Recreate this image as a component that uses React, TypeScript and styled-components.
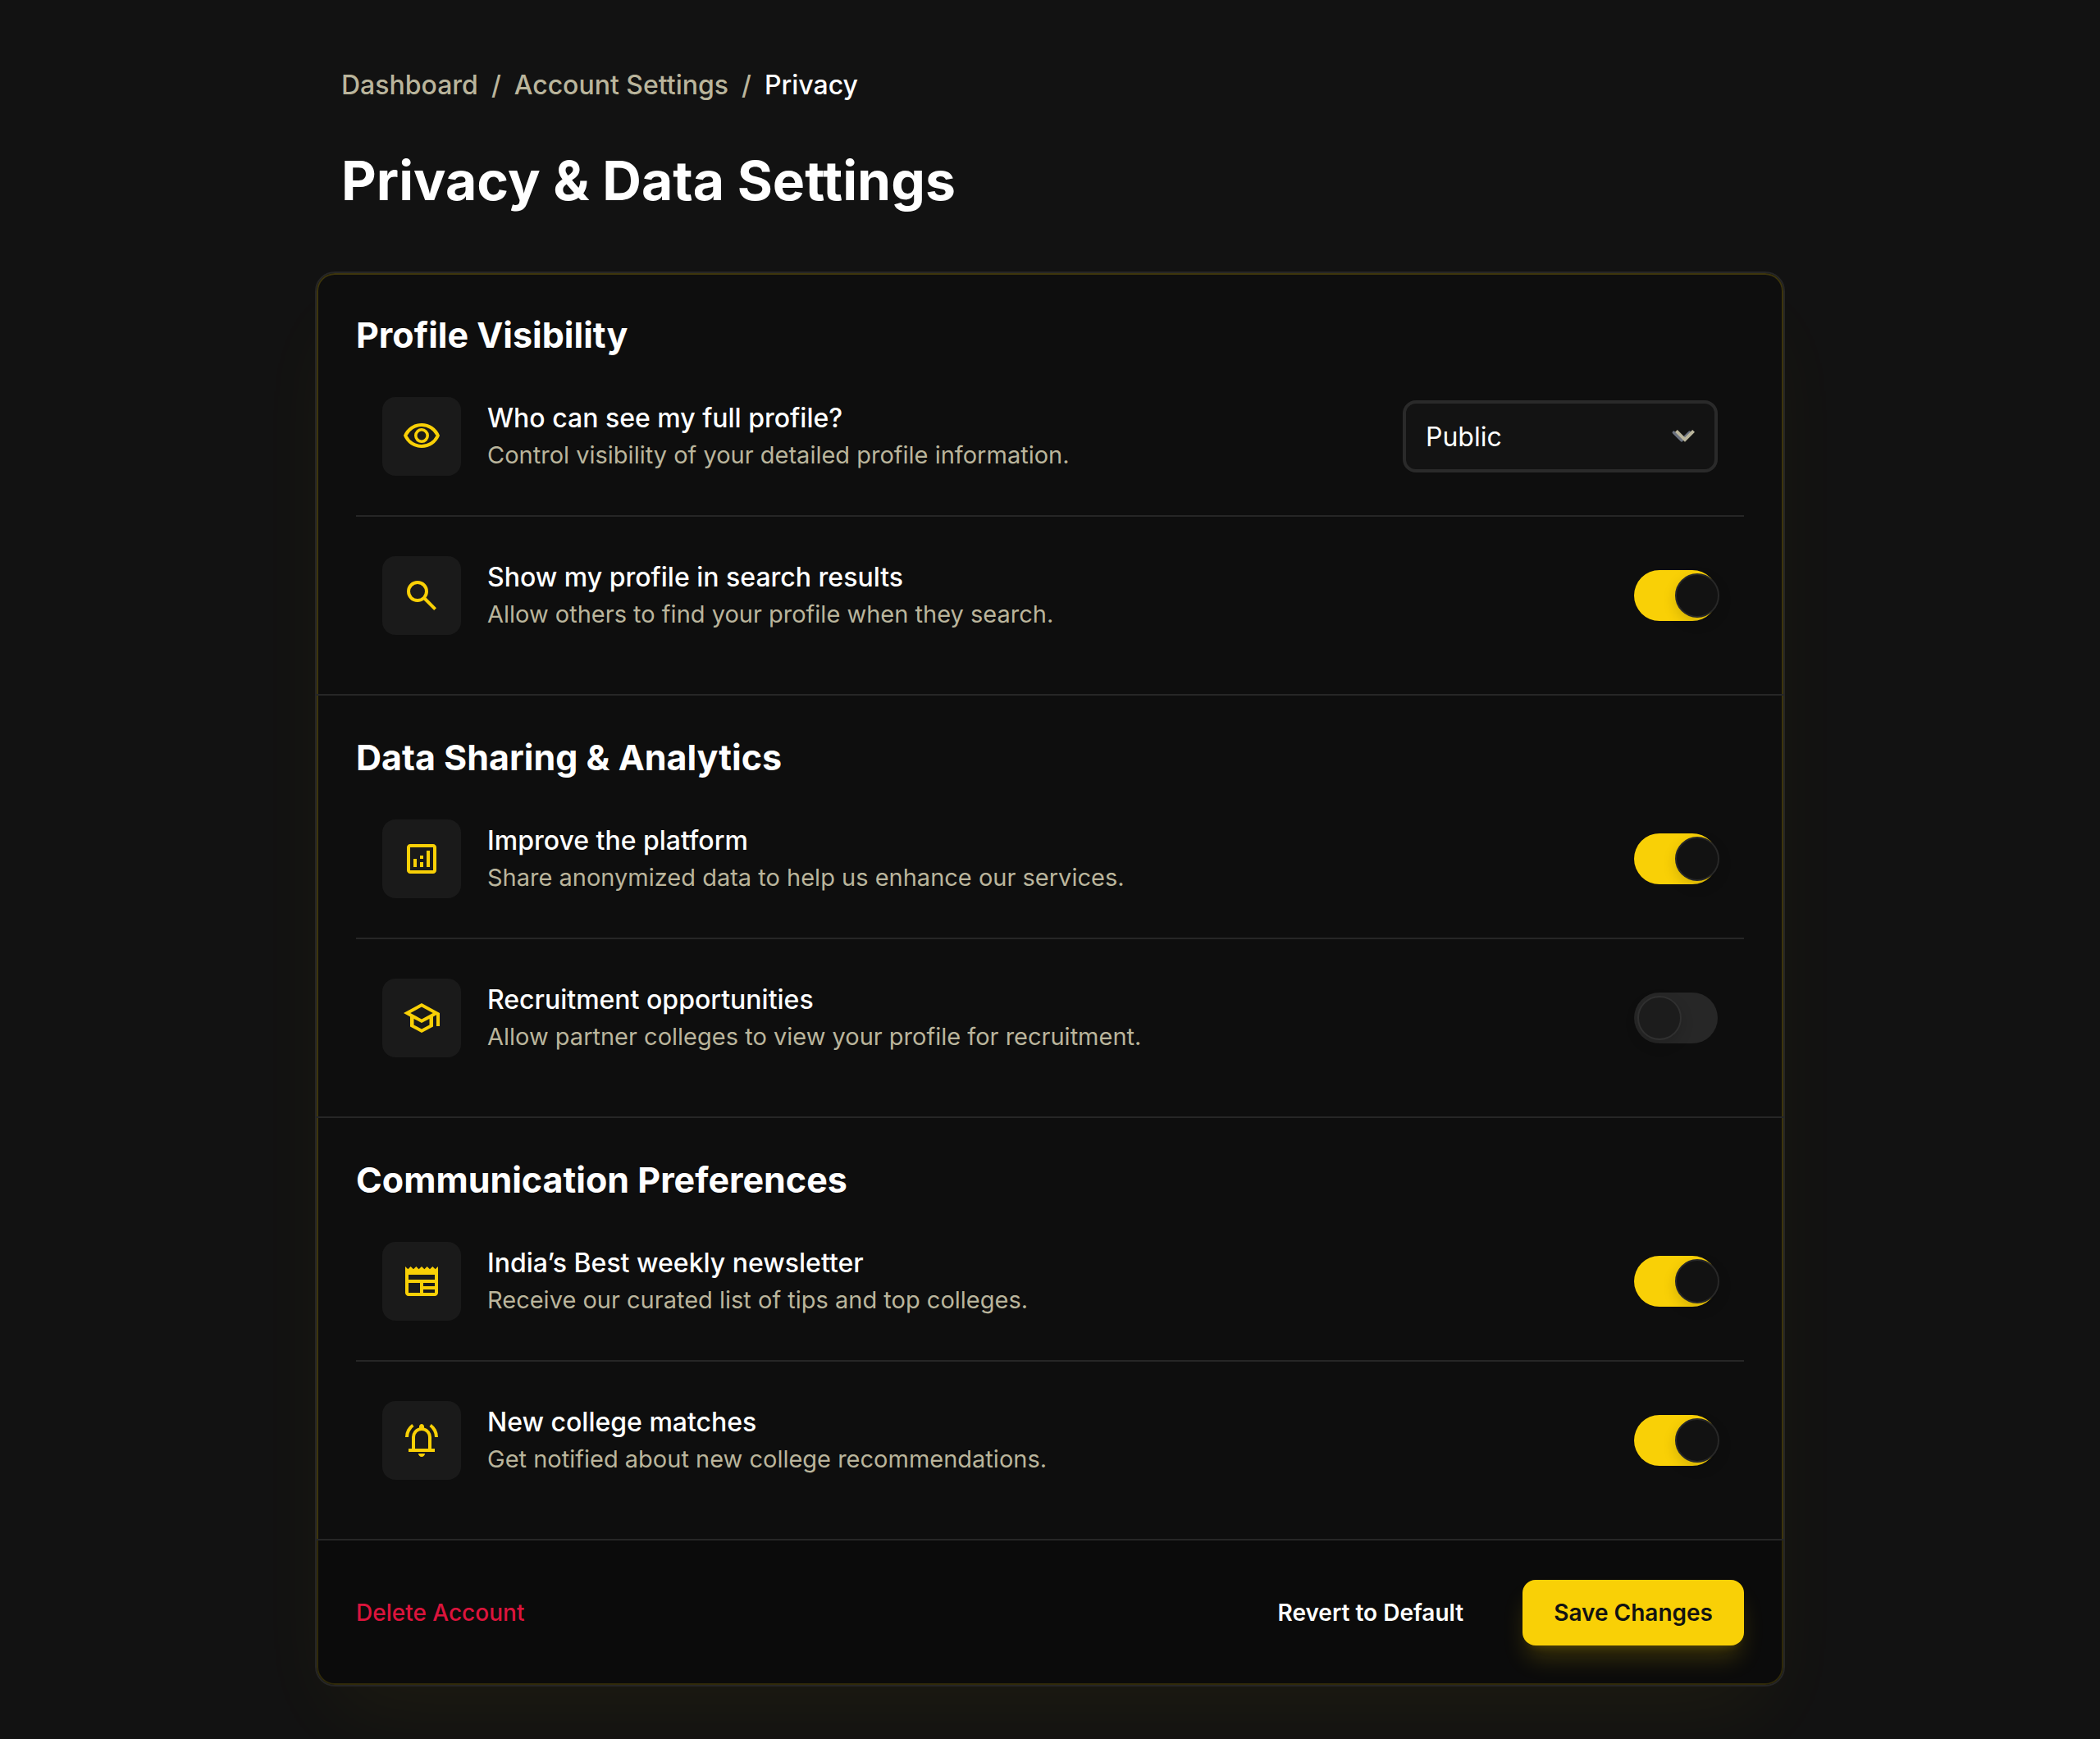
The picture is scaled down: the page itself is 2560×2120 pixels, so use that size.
import React, { useId, useState } from "react";
import styled, { createGlobalStyle } from "styled-components";

const color = {
  page: "#121212",
  card: "#0e0e0e",
  line: "#262626",
  tile: "#1a1a1a",
  text: "#ffffff",
  muted: "#bab59c",
  accent: "#f9d006",
  danger: "#dc143c",
};

const GlobalStyle = createGlobalStyle`
  *, *::before, *::after { box-sizing: border-box; }
  body {
    margin: 0;
    background: ${color.page};
    color: ${color.text};
    font-family: "Inter", "Liberation Sans", sans-serif;
    font-size: 32px;
  }
  button, select, input { font-family: inherit; margin: 0; }
`;

const Page = styled.main`
  max-width: 1792px;
  min-height: 100vh;
  margin: 0 auto;
  padding: 80px 0 64px;
`;

const Header = styled.header`
  padding: 0 32px;
`;

const Crumbs = styled.ol`
  display: flex;
  flex-wrap: wrap;
  gap: 16px;
  margin: 0;
  padding: 0;
  list-style: none;
  font-weight: 500;
  line-height: 48px;
  color: ${color.muted};
`;

const Crumb = styled.li`
  display: flex;
  gap: 16px;

  &:not(:last-child)::after {
    content: "/";
  }
`;

const CrumbLink = styled.a<{ $current?: boolean }>`
  color: ${(p) => (p.$current ? color.text : "inherit")};
  text-decoration: none;
`;

const Title = styled.h1`
  margin: 47px 0 66px;
  font-size: 66px;
  line-height: 90px;
  font-weight: 700;
`;

const Card = styled.form`
  overflow: hidden;
  border: 2px solid ${color.line};
  border-radius: 24px;
  background: ${color.card};
  box-shadow:
    inset 0 0 0 2px rgba(249, 208, 6, 0.2),
    0 50px 100px -24px rgba(249, 208, 6, 0.05);
`;

const Section = styled.section`
  padding: 48px 48px 24px;
  border-bottom: 2px solid ${color.line};
`;

const SectionTitle = styled.h2`
  margin: 0;
  font-size: 43px;
  line-height: 55px;
  font-weight: 700;
`;

const Row = styled.div`
  display: flex;
  align-items: center;
  gap: 32px;
  padding: 48px 32px;

  & + & {
    border-top: 2px solid ${color.line};
  }
`;

const Tile = styled.span`
  display: grid;
  place-items: center;
  flex: none;
  width: 96px;
  height: 96px;
  border-radius: 16px;
  background: ${color.tile};
  color: ${color.accent};
`;

const Glyph = styled.svg`
  width: 48px;
  height: 48px;
  fill: currentColor;
`;

const RowText = styled.div`
  flex: 1;
  min-width: 0;
`;

const RowLabel = styled.label`
  display: block;
  font-weight: 500;
  line-height: 46px;
`;

const RowHint = styled.p`
  margin: 0;
  font-size: 29px;
  line-height: 44px;
  color: ${color.muted};
`;

const SelectWrap = styled.div`
  position: relative;
  flex: none;
  width: 384px;
`;

const Select = styled.select`
  appearance: none;
  display: block;
  width: 100%;
  height: 88px;
  padding: 0 80px 0 24px;
  border: 4px solid #2a2a2a;
  border-radius: 16px;
  background: #131313;
  color: ${color.text};
  font-size: 32px;
`;

const Chevron = styled.svg`
  position: absolute;
  top: 20px;
  right: 16px;
  width: 52px;
  height: 48px;
  pointer-events: none;
`;

const Switch = styled.input`
  appearance: none;
  position: relative;
  flex: none;
  width: 102px;
  height: 62px;
  border-radius: 31px;
  background: #272727;
  cursor: pointer;

  &::after {
    content: "";
    position: absolute;
    top: 4px;
    left: 4px;
    width: 54px;
    height: 54px;
    border: 2px solid #303030;
    border-radius: 50%;
    background: #1c1c1c;
    box-shadow: 0 6px 16px rgba(0, 0, 0, 0.15);
  }

  &:checked {
    background: ${color.accent};
  }

  &:checked::after {
    left: 50px;
    border-color: #282828;
    background: ${color.page};
  }
`;

const Footer = styled.footer`
  display: flex;
  align-items: center;
  justify-content: space-between;
  padding: 48px;
  background: rgba(0, 0, 0, 0.2);
`;

const Actions = styled.div`
  display: flex;
  gap: 34px;
`;

const Button = styled.button<{ $kind: "danger" | "plain" | "primary" }>`
  height: 80px;
  padding: 0 ${(p) => (p.$kind === "danger" ? 0 : 38)}px;
  border: 0;
  border-radius: 16px;
  background: ${(p) => (p.$kind === "primary" ? color.accent : "transparent")};
  color: ${(p) => ({ danger: color.danger, plain: color.text, primary: color.page })[p.$kind]};
  font-size: 28px;
  font-weight: ${(p) => (p.$kind === "danger" ? 500 : 600)};
  box-shadow: ${(p) =>
    p.$kind === "primary"
      ? "0 20px 30px -6px rgba(249, 208, 6, 0.2), 0 8px 12px -8px rgba(249, 208, 6, 0.2)"
      : "none"};
  cursor: pointer;
`;

const icons = {
  eye: "M480-320q75 0 127.5-52.5T660-500q0-75-52.5-127.5T480-680q-75 0-127.5 52.5T300-500q0 75 52.5 127.5T480-320Zm0-72q-45 0-76.5-31.5T372-500q0-45 31.5-76.5T480-608q45 0 76.5 31.5T588-500q0 45-31.5 76.5T480-392Zm0 192q-146 0-266-81.5T40-500q54-137 174-218.5T480-800q146 0 266 81.5T920-500q-54 137-174 218.5T480-200Zm0-80q113 0 207.5-59.5T832-500q-50-101-144.5-160.5T480-720q-113 0-207.5 59.5T128-500q50 101 144.5 160.5T480-280Z",
  search:
    "M784-120 532-372q-30 24-69 38t-83 14q-109 0-184.5-75.5T120-580q0-109 75.5-184.5T380-840q109 0 184.5 75.5T640-580q0 44-14 83t-38 69l252 252-56 56ZM380-400q75 0 127.5-52.5T560-580q0-75-52.5-127.5T380-760q-75 0-127.5 52.5T200-580q0 75 52.5 127.5T380-400Z",
  analytics:
    "M280-280h80v-200h-80v200Zm320 0h80v-400h-80v400Zm-160 0h80v-120h-80v120Zm0-200h80v-80h-80v80ZM200-120q-33 0-56.5-23.5T120-200v-560q0-33 23.5-56.5T200-840h560q33 0 56.5 23.5T840-760v560q0 33-23.5 56.5T760-120H200Zm0-80h560v-560H200v560Z",
  school:
    "M480-120 200-272v-240L40-600l440-240 440 240v320h-80v-276l-80 44v240L480-120Zm0-332 274-148-274-148-274 148 274 148Zm0 241 190-99v-151L480-360 290-461v151l190 99Z",
  newspaper:
    "M160-120q-33 0-56.5-23.5T80-200v-640l67 67 66-67 67 67 67-67 66 67 67-67 67 67 66-67 67 67 67-67 66 67 67-67v640q0 33-23.5 56.5T800-120H160Zm0-80h280v-240H160v240Zm360 0h280v-80H520v80Zm0-160h280v-80H520v80ZM160-520h640v-120H160v120Z",
  bell: "M80-560q0-100 44.5-183.5T244-882l47 64q-60 44-95.5 111T160-560H80Zm720 0q0-80-35.5-147T669-818l47-64q75 55 119.5 138.5T880-560h-80ZM160-200v-80h80v-280q0-83 50-147.5T420-792v-28q0-25 17.5-42.5T480-880q25 0 42.5 17.5T540-820v28q80 20 130 84.5T720-560v280h80v80H160ZM480-80q-33 0-56.5-23.5T400-160h160q0 33-23.5 56.5T480-80ZM320-280h320v-280q0-66-47-113t-113-47q-66 0-113 47t-47 113v280Z",
};

type Setting = {
  icon: keyof typeof icons;
  label: string;
  hint: string;
  options?: string[];
  on?: boolean;
};

const sections: { title: string; settings: Setting[] }[] = [
  {
    title: "Profile Visibility",
    settings: [
      {
        icon: "eye",
        label: "Who can see my full profile?",
        hint: "Control visibility of your detailed profile information.",
        options: ["Public", "Private"],
      },
      {
        icon: "search",
        label: "Show my profile in search results",
        hint: "Allow others to find your profile when they search.",
        on: true,
      },
    ],
  },
  {
    title: "Data Sharing & Analytics",
    settings: [
      {
        icon: "analytics",
        label: "Improve the platform",
        hint: "Share anonymized data to help us enhance our services.",
        on: true,
      },
      {
        icon: "school",
        label: "Recruitment opportunities",
        hint: "Allow partner colleges to view your profile for recruitment.",
        on: false,
      },
    ],
  },
  {
    title: "Communication Preferences",
    settings: [
      {
        icon: "newspaper",
        label: "India’s Best weekly newsletter",
        hint: "Receive our curated list of tips and top colleges.",
        on: true,
      },
      {
        icon: "bell",
        label: "New college matches",
        hint: "Get notified about new college recommendations.",
        on: true,
      },
    ],
  },
];

function SettingRow({ icon, label, hint, options, on = false }: Setting) {
  const id = useId();
  const [checked, setChecked] = useState(on);

  return (
    <Row>
      <Tile>
        <Glyph viewBox="0 -960 960 960" aria-hidden="true">
          <path d={icons[icon]} />
        </Glyph>
      </Tile>
      <RowText>
        <RowLabel htmlFor={id}>{label}</RowLabel>
        <RowHint>{hint}</RowHint>
      </RowText>
      {options ? (
        <SelectWrap>
          <Select id={id} defaultValue={options[0]}>
            {options.map((option) => (
              <option key={option}>{option}</option>
            ))}
          </Select>
          <Chevron viewBox="0 0 52 48" aria-hidden="true">
            <path
              d="M14.4 19.2l9.6 9.6 9.6-9.6"
              fill="none"
              stroke="#6b7280"
              strokeWidth="3.6"
              strokeLinecap="round"
              strokeLinejoin="round"
            />
            <path d="M28 30.8 16 18.8l2.8-2.8 9.2 9.2 9.2-9.2 2.8 2.8-12 12Z" fill={color.muted} />
          </Chevron>
        </SelectWrap>
      ) : (
        <Switch
          id={id}
          type="checkbox"
          role="switch"
          checked={checked}
          onChange={(event) => setChecked(event.target.checked)}
        />
      )}
    </Row>
  );
}

export default function App() {
  return (
    <>
      <GlobalStyle />
      <Page>
        <Header>
          <nav aria-label="Breadcrumb">
            <Crumbs>
              <Crumb>
                <CrumbLink href="#dashboard">Dashboard</CrumbLink>
              </Crumb>
              <Crumb>
                <CrumbLink href="#account">Account Settings</CrumbLink>
              </Crumb>
              <Crumb>
                <CrumbLink href="#privacy" aria-current="page" $current>
                  Privacy
                </CrumbLink>
              </Crumb>
            </Crumbs>
          </nav>
          <Title>Privacy &amp; Data Settings</Title>
        </Header>
        <Card onSubmit={(event) => event.preventDefault()}>
          {sections.map((section) => (
            <Section key={section.title}>
              <SectionTitle>{section.title}</SectionTitle>
              {section.settings.map((setting) => (
                <SettingRow key={setting.label} {...setting} />
              ))}
            </Section>
          ))}
          <Footer>
            <Button type="button" $kind="danger">
              Delete Account
            </Button>
            <Actions>
              <Button type="reset" $kind="plain">
                Revert to Default
              </Button>
              <Button type="submit" $kind="primary">
                Save Changes
              </Button>
            </Actions>
          </Footer>
        </Card>
      </Page>
    </>
  );
}
